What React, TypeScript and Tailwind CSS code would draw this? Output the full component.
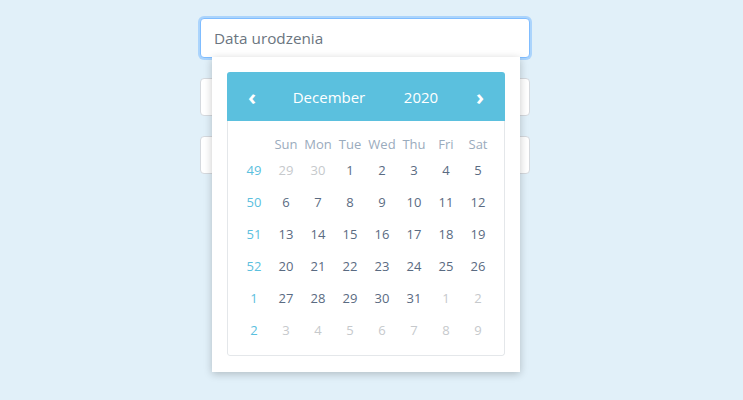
import React from 'react'

const weekDays = ['Sun', 'Mon', 'Tue', 'Wed', 'Thu', 'Fri', 'Sat'];

const weeks: { wk: number; days: { d: number; muted?: boolean }[] }[] = [
  { wk: 49, days: [{ d: 29, muted: true }, { d: 30, muted: true }, { d: 1 }, { d: 2 }, { d: 3 }, { d: 4 }, { d: 5 }] },
  { wk: 50, days: [6, 7, 8, 9, 10, 11, 12].map(d => ({ d })) },
  { wk: 51, days: [13, 14, 15, 16, 17, 18, 19].map(d => ({ d })) },
  { wk: 52, days: [20, 21, 22, 23, 24, 25, 26].map(d => ({ d })) },
  { wk: 1, days: [{ d: 27 }, { d: 28 }, { d: 29 }, { d: 30 }, { d: 31 }, { d: 1, muted: true }, { d: 2, muted: true }] },
  { wk: 2, days: [3, 4, 5, 6, 7, 8, 9].map(d => ({ d, muted: true })) },
];

const App: React.FC = () => {
  return (
    <div
      className="min-h-screen w-full bg-[#e1f0f9] pt-[18px]"
      style={{ fontFamily: '"Open Sans", "Noto Sans", sans-serif' }}
    >
      <div className="relative w-[330px] ml-[200px] flex flex-col gap-[20px]">
        {/* Focused input */}
        <div className="h-[40px] rounded-[4px] border border-[#80bdff] bg-white shadow-[0_0_0_2px_rgba(128,189,255,0.55)] flex items-center pl-[13px] pt-[1px]">
          <span className="text-[15.3px] text-[#6b7580]">Data urodzenia</span>
        </div>
        <div className="h-[38px] rounded-[4px] border border-[#d5d9de] bg-white" />
        <div className="h-[38px] rounded-[4px] border border-[#d5d9de] bg-white" />

        {/* Datepicker dropdown */}
        <div className="absolute left-[12px] top-[39px] w-[308px] bg-white px-[15px] pt-[15px] pb-[16px] shadow-[0_2px_8px_rgba(0,0,0,0.22)]">
          <div className="rounded-[3px] overflow-hidden">
            <div className="h-[49px] bg-[#5bc0de] flex items-center pt-[2px] text-white text-[15px]">
              <span className="w-[50px] text-center text-[22px] font-bold leading-none pb-[3px]">‹</span>
              <span className="w-[104px] text-center">December</span>
              <span className="w-[80px] text-center">2020</span>
              <span className="w-[44px] text-center text-[22px] font-bold leading-none pb-[3px] pr-[6px]">›</span>
            </div>
            <div className="border border-t-0 border-[#e4e7ea] rounded-b-[3px] px-[10px] pt-[14px] pb-[8px]">
              <div className="grid grid-cols-8 text-[13px]">
                <div className="h-[20px]" />
                {weekDays.map(w => (
                  <div key={w} className="h-[20px] flex items-center justify-center text-[#9aabbd]">{w}</div>
                ))}
                {weeks.map(row => (
                  <React.Fragment key={row.wk}>
                    <div className="h-[32px] flex items-center justify-center text-[#5bc0de]">{row.wk}</div>
                    {row.days.map((c, i) => (
                      <div
                        key={i}
                        className={
                          c.muted
                            ? 'h-[32px] flex items-center justify-center text-[#c6c9cc]'
                            : 'h-[32px] flex items-center justify-center text-[#5a6b82]'
                        }
                      >
                        {c.d}
                      </div>
                    ))}
                  </React.Fragment>
                ))}
              </div>
            </div>
          </div>
        </div>
      </div>
    </div>
  )
}

export default App
